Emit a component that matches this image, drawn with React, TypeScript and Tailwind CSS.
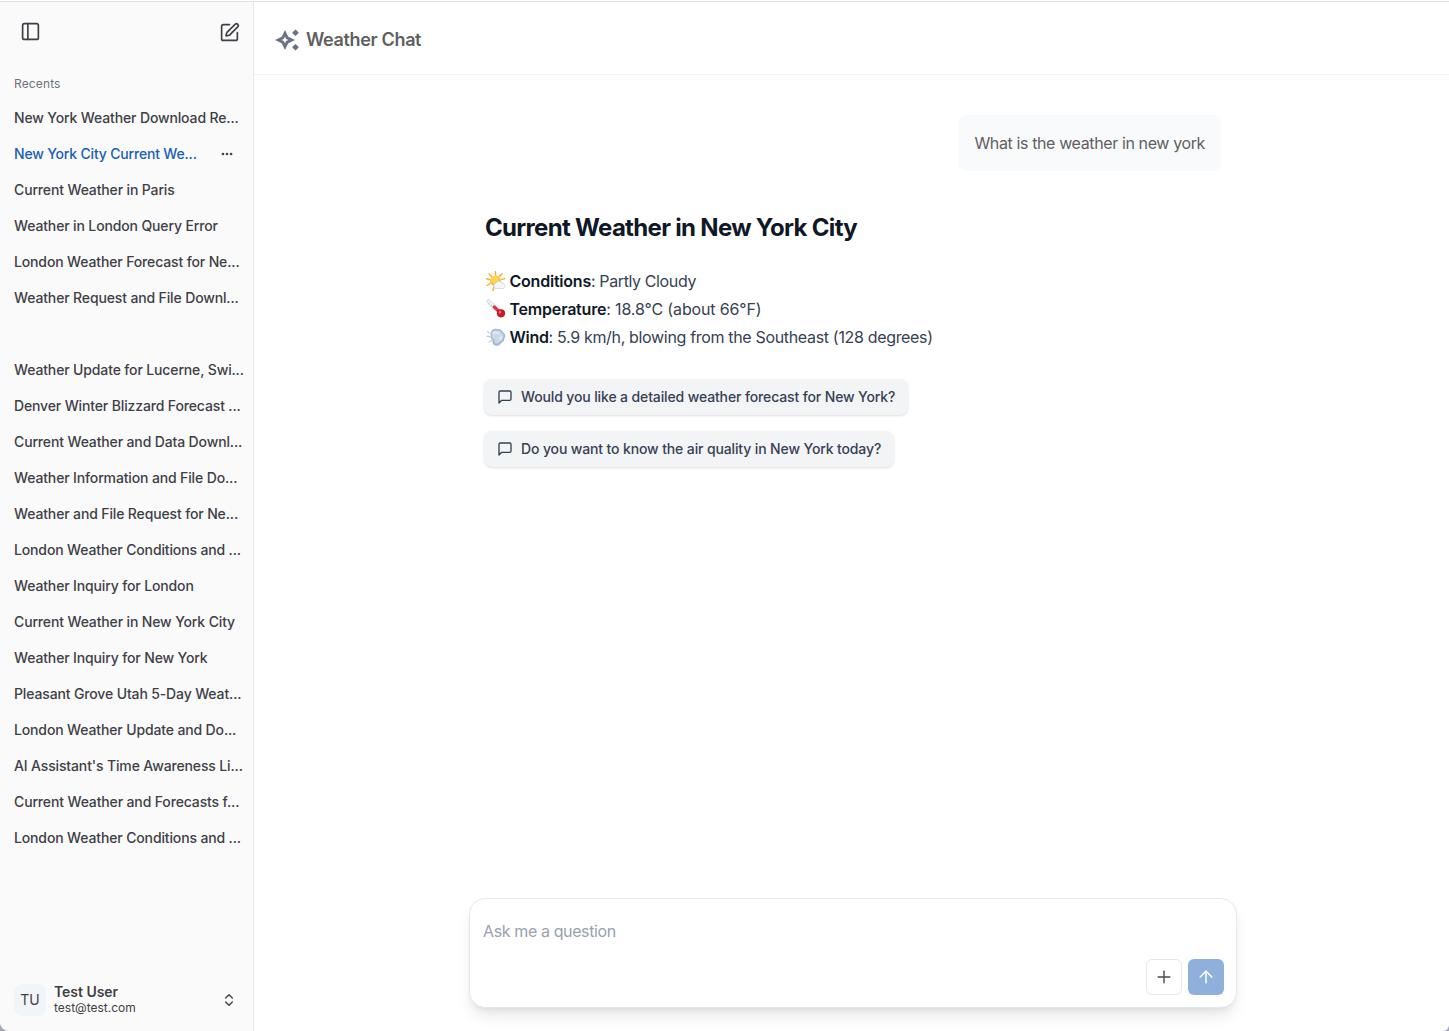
import { ArrowUp, ChevronsUpDown, Ellipsis, PanelLeft, Plus, SquarePen } from "lucide-react";

const chats = [
  "New York Weather Download Re...",
  "New York City Current We...",
  "Current Weather in Paris",
  "Weather in London Query Error",
  "London Weather Forecast for Ne...",
  "Weather Request and File Downl...",
  "",
  "Weather Update for Lucerne, Swi...",
  "Denver Winter Blizzard Forecast ...",
  "Current Weather and Data Downl...",
  "Weather Information and File Do...",
  "Weather and File Request for Ne...",
  "London Weather Conditions and ...",
  "Weather Inquiry for London",
  "Current Weather in New York City",
  "Weather Inquiry for New York",
  "Pleasant Grove Utah 5-Day Weat...",
  "London Weather Update and Do...",
  "AI Assistant's Time Awareness Li...",
  "Current Weather and Forecasts f...",
  "London Weather Conditions and ...",
];

function Sparkles() {
  return (
    <svg width="24" height="22" viewBox="0 0 24 22" fill="#6b7280" className="shrink-0">
      <path
        fillRule="evenodd"
        d="M10 1 L13.3 7.7 L20 11 L13.3 14.3 L10 21 L6.7 14.3 L0 11 L6.7 7.7 Z M10 7.6 L8.9 9.9 L6.6 11 L8.9 12.1 L10 14.4 L11.1 12.1 L13.4 11 L11.1 9.9 Z"
      />
      <path d="M20.500 .5 L22.200 2.100 L23.800 3.800 L22.200 5.500 L20.500 7.100 L18.800 5.500 L17.200 3.800 L18.800 2.100 Z" />
      <path d="M20.500 14.900 L22.200 16.500 L23.800 18.200 L22.200 19.900 L20.500 21.500 L18.800 19.900 L17.200 18.200 L18.800 16.500 Z" />
    </svg>
  );
}

function SunCloud() {
  return (
    <svg width="20" height="20" viewBox="0 0 20 20" className="shrink-0">
      <path
        d="M9.500 .6v3M3 3l2.400 2.300M16 2.800l-2.300 2.300M.6 7.800l3 .8M18.800 7.600l-3 .8M1.200 14.500l3-2M7 19.300l.8-3"
        stroke="#f8ad2b"
        strokeWidth="1.500"
        strokeLinecap="round"
      />
      <circle cx="9.500" cy="9.800" r="5.400" fill="#fbbd2c" />
      <circle cx="9" cy="9" r="3.800" fill="#fdd64c" />
      <path d="M10.200 18a3.100 3.100 0 0 1-.6-6.100 3.900 3.900 0 0 1 6.900-.2 3.300 3.300 0 0 1 .5 6.300z" fill="#c9d5e0" />
      <path d="M10.300 17.200a2.400 2.400 0 0 1-.2-4.700 3.300 3.300 0 0 1 5.900-.1 2.500 2.500 0 0 1 1 4.800z" fill="#f5f8fb" />
    </svg>
  );
}

function Thermometer() {
  return (
    <svg width="20" height="20" viewBox="0 0 20 20" className="shrink-0">
      <path d="M2.600 2.400 13.500 13" stroke="#ccd5e1" strokeWidth="4" strokeLinecap="round" />
      <path d="M2.600 2.400 13 12.500" stroke="#f3f6fa" strokeWidth="2.600" strokeLinecap="round" />
      <path d="M2.500 5l1.400-1.300M4.500 7l1.400-1.300M6.500 9l1.400-1.300" stroke="#97a1b0" strokeWidth=".7" />
      <path d="M8.200 7.800 14 13.400" stroke="#e0303a" strokeWidth="3" strokeLinecap="round" />
      <circle cx="15" cy="14.300" r="4.100" fill="#d01525" />
      <circle cx="14" cy="13.200" r="1.300" fill="#f77b84" />
    </svg>
  );
}

function WindPuff() {
  return (
    <svg width="20" height="20" viewBox="0 0 20 20" className="shrink-0">
      <path
        d="M5 6.500C4.500 3 8 .8 11.200 2.100c2.700-.8 5.300.8 5.400 3.200 2.800 1 3.500 4.200 1.700 6.200.3 2.400-1.300 3.900-3.100 4.200-.9 2.700-4.400 4-6.500 2.600-2-.8-2.800-3-1.900-4.900C4.600 11.900 3.900 8.700 5 6.500z"
        fill="#a3b9d1"
      />
      <path
        d="M6.200 6.600c-.2-2.500 2.400-3.900 4.700-3 2.300-.7 4.300.4 4.400 2.500 2.300.8 2.900 3.200 1.500 4.800.2 2.100-1.300 3.100-2.800 3.200-.5 2-2.700 3-4.300 2.300-1.500-.8-1.700-2.500-.8-3.800-2.800-.8-3.900-4-2.700-6z"
        fill="#c9d9ea"
      />
      <path
        d="M7.500 6.200c1.700-1.500 4-1 5 .7M13 11.500c1.500 0 2.500-.6 2.800-1.700"
        fill="none"
        stroke="#e6eef7"
        strokeWidth="1.300"
        strokeLinecap="round"
      />
      <path
        d="M1.500 4.500C2.500 6 4 6.400 6 6.600M1 9.200c1.800.8 3.200.6 4.800.2M3 15c1.500-.5 2.800-1.500 3.800-2.700"
        fill="none"
        stroke="#bccbdc"
        strokeWidth="1.300"
        strokeLinecap="round"
      />
    </svg>
  );
}

function Suggestion({ text }: { text: string }) {
  return (
    <button className="flex h-9 items-center rounded-lg bg-gray-100 px-[13px] text-sm font-medium text-gray-700 shadow-sm">
      <svg
        viewBox="0 0 24 24"
        fill="none"
        stroke="currentColor"
        strokeWidth="2"
        strokeLinecap="round"
        strokeLinejoin="round"
        className="mr-2 size-4"
      >
        <path d="M21 15a2 2 0 0 1-2 2H7l-4 4V5a2 2 0 0 1 2-2h14a2 2 0 0 1 2 2z" />
      </svg>
      <span className="tracking-[-0.13px]">{text}</span>
    </button>
  );
}

export default function App() {
  return (
    <div className="bg-[#a3a5b3]">
      <div className="flex h-[1031px] flex-col overflow-hidden rounded-br-[6px] rounded-bl-[9px] bg-white pt-px font-['Inter',sans-serif]">
        <div className="h-px shrink-0 bg-[#e0e0e2]" />
        <div className="flex min-h-0 flex-1">
          <aside className="flex w-[254px] shrink-0 flex-col border-r border-gray-200 bg-[#fafafa] text-zinc-700">
            <div className="flex h-[60px] items-center justify-between pr-[13px] pl-5">
              <PanelLeft className="mb-px size-[21px]" strokeWidth={1.9} />
              <SquarePen className="mt-px size-[21px]" strokeWidth={1.9} />
            </div>
            <div className="mt-3.5 h-6 px-3.5 text-xs leading-[16px] tracking-[0.13px] text-[#71717a]">Recents</div>
            <ul className="flex flex-col text-sm font-medium tracking-[-0.14px]">
              {chats.map((chat, i) => (
                <li
                  key={i}
                  className={
                    i === 1
                      ? "flex h-9 items-center justify-between pr-[19px] pl-3.5 tracking-[-0.18px] text-[#1860b8]"
                      : "flex h-9 items-center pl-3.5 whitespace-nowrap"
                  }
                >
                  <span>{chat}</span>
                  {i === 1 && <Ellipsis className="size-3.5 text-zinc-700" strokeWidth={2.6} />}
                </li>
              ))}
            </ul>
            <div className="mt-auto mb-[15px] flex h-8 items-center pr-4 pl-3.5">
              <div className="flex size-8 items-center justify-center rounded-lg bg-[#f1f5f9] text-sm">TU</div>
              <div className="ml-2 flex-1">
                <div className="text-sm leading-[16px] font-semibold tracking-[-0.03px]">Test User</div>
                <div className="text-xs leading-[16px]">test@test.com</div>
              </div>
              <ChevronsUpDown className="size-4" />
            </div>
          </aside>

          <main className="flex min-w-0 flex-1 flex-col">
            <header className="flex h-[73px] shrink-0 items-center gap-[7px] border-b border-[#f1f2f4] pt-[3px] pl-[21px]">
              <Sparkles />
              <h1 className="text-lg font-semibold tracking-[-0.35px] text-[#5f5f5f]">Weather Chat</h1>
            </header>

            <div className="ml-[215px] flex w-[768px] flex-1 flex-col">
              <div className="mt-10 mr-4 flex h-14 items-center self-end rounded-lg bg-[#f9fafb] px-4 text-base text-[#5f5f5f]">
                <span className="tracking-[-0.38px]">What is the weather in new york</span>
              </div>
              <article className="mt-[41px] pl-4 text-base text-gray-700">
                <h2 className="text-2xl leading-8 font-bold tracking-[-0.69px] text-gray-900">
                  Current Weather in New York City
                </h2>
                <div className="mt-[23px] leading-7">
                  <p className="flex items-center gap-1 pl-[0.5px]">
                    <SunCloud />
                    <span className="tracking-[-0.38px]">
                      <strong className="font-semibold tracking-[-0.22px] text-gray-900">Conditions</strong>: Partly Cloudy
                    </span>
                  </p>
                  <p className="flex items-center gap-1 pl-[0.5px]">
                    <Thermometer />
                    <span className="tracking-[-0.14px]">
                      <strong className="font-semibold tracking-[-0.2px] text-gray-900">Temperature</strong>: 18.8°C (about 66°F)
                    </span>
                  </p>
                  <p className="flex items-center gap-1 pl-[0.5px]">
                    <WindPuff />
                    <span className="tracking-[-0.33px]">
                      <strong className="font-semibold tracking-[-0.3px] text-gray-900">Wind</strong>: 5.9 km/h, blowing from the
                      Southeast (128 degrees)
                    </span>
                  </p>
                </div>
              </article>
              <div className="mt-7 ml-[15px] flex flex-col items-start gap-4">
                <Suggestion text="Would you like a detailed weather forecast for New York?" />
                <Suggestion text="Do you want to know the air quality in New York today?" />
              </div>
              <div className="mt-auto mb-[23px] flex h-[110px] flex-col justify-between rounded-2xl border border-slate-200 bg-white px-3 pt-5 pb-3 shadow-lg">
                <div className="pl-px text-base tracking-[-0.38px] text-gray-400">Ask me a question</div>
                <div className="flex justify-end gap-1.5">
                  <button className="flex size-9 items-center justify-center rounded-md border border-slate-200 text-[#4b4b4b]">
                    <Plus className="size-5" strokeWidth={1.7} />
                  </button>
                  <button className="flex size-9 items-center justify-center rounded-md bg-[#8fb0db] text-white">
                    <ArrowUp className="size-5" strokeWidth={1.8} />
                  </button>
                </div>
              </div>
            </div>
          </main>
        </div>
      </div>
    </div>
  );
}
